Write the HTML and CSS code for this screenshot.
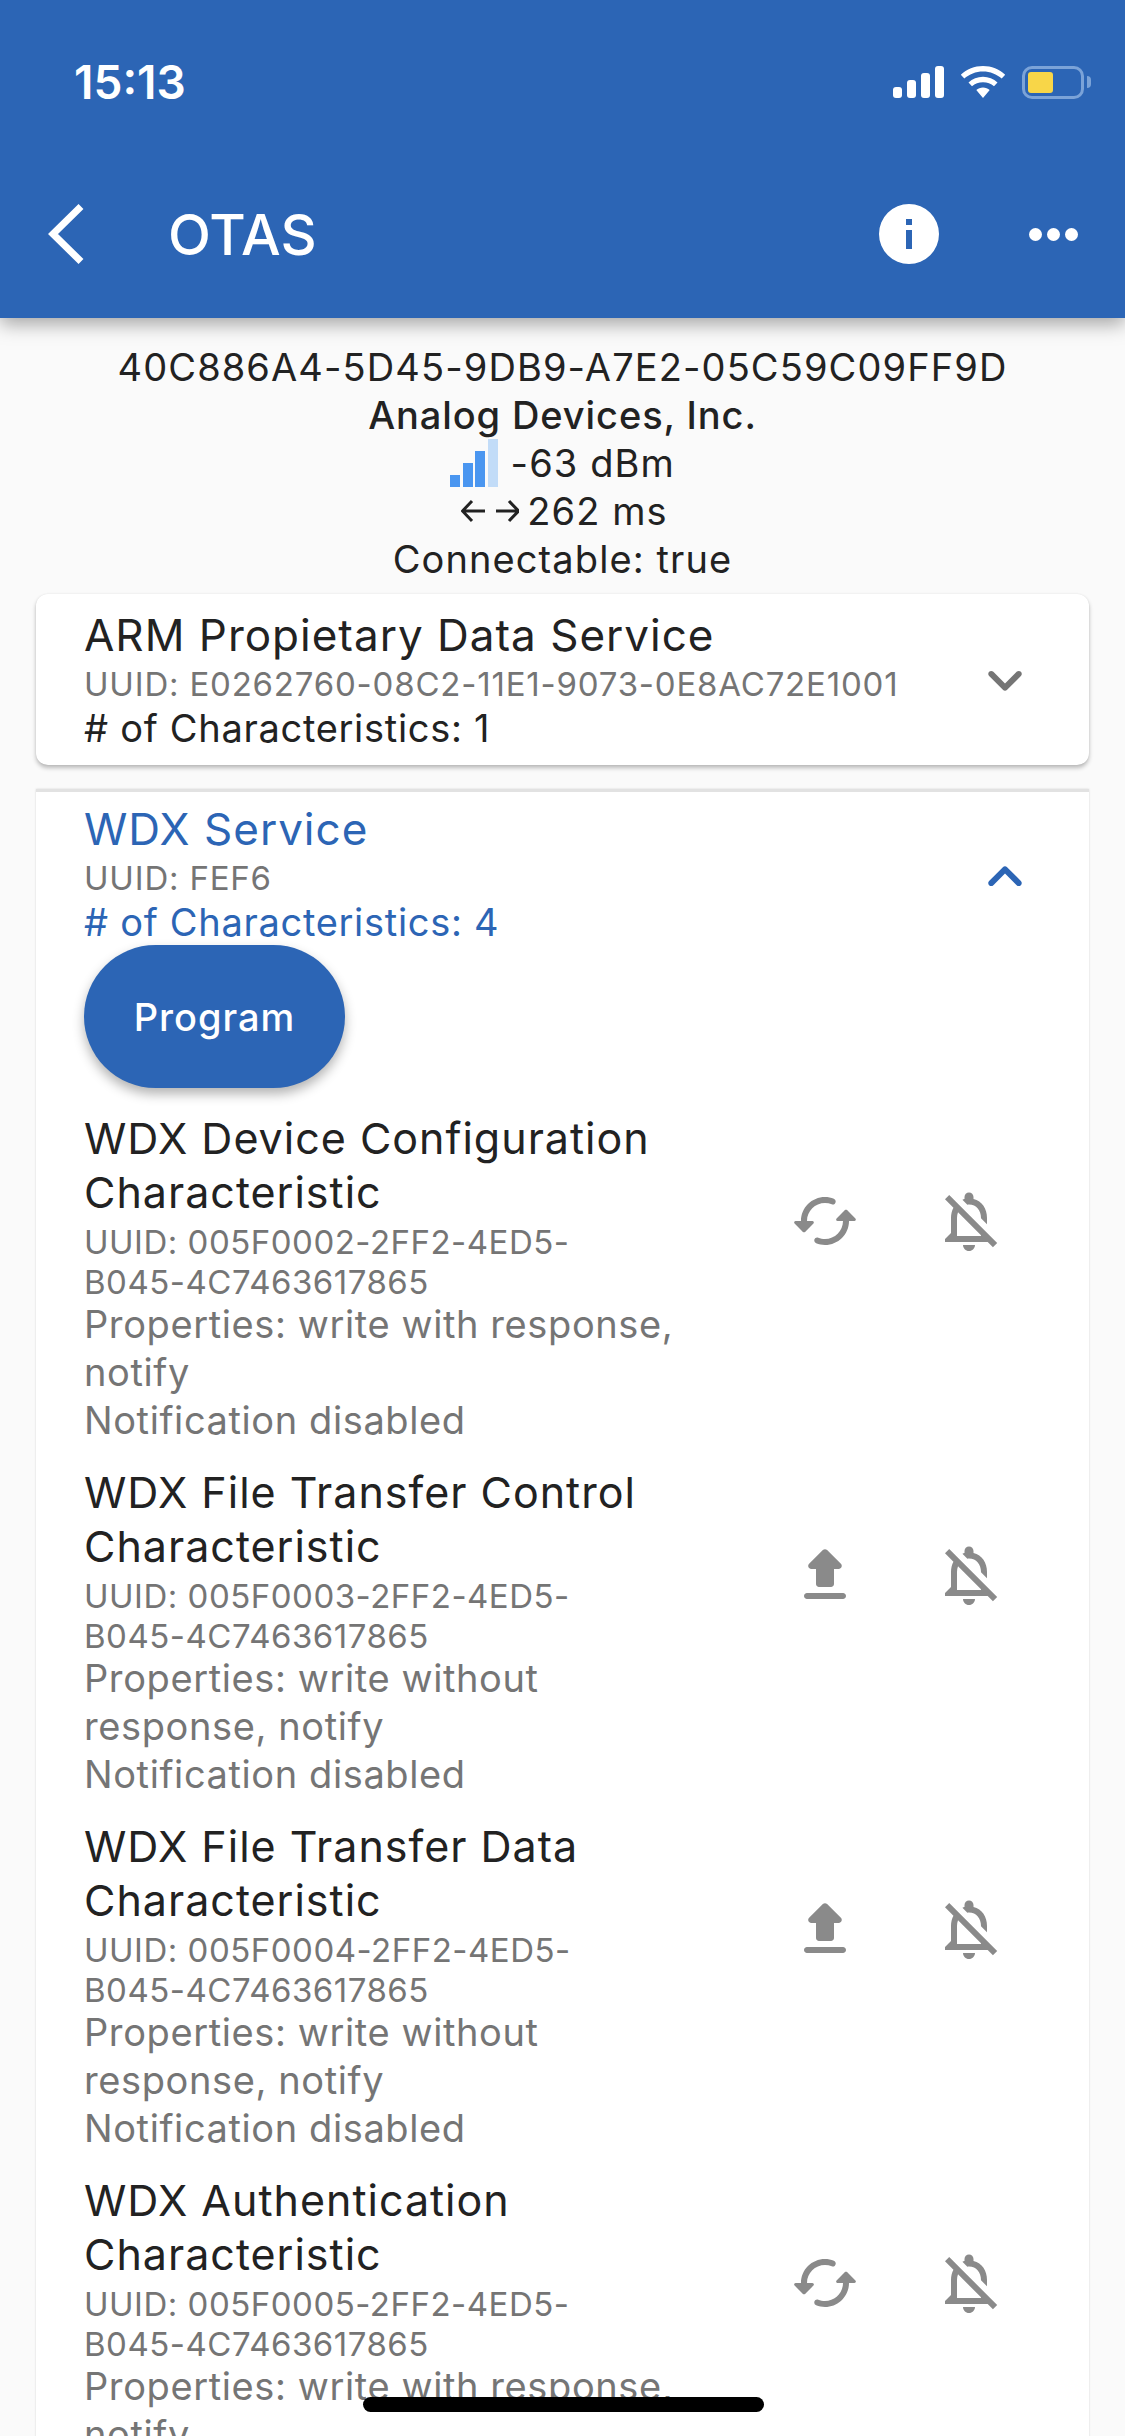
FILE: index.html
```html
<!DOCTYPE html>
<html lang="en">
<head>
    <meta charset="UTF-8">
    <meta name="viewport" content="width=device-width, initial-scale=1.0">
    <title>OTAS</title>
    <link rel="stylesheet" href="styles.css">
</head>
<body>
    <div class="appbar">
        <div class="status">
            <span class="time">15:13</span>
            <div class="status-icons">
                <div class="signal"><i></i><i></i><i></i><i></i></div>
                <svg class="wifi" width="46" height="32" viewBox="0 0 46 32">
                    <path fill="#fff" d="M23 0C14.500 0 6.700 3.300 0.800 8.700L4.300 12.600C9.200 8.100 15.800 5.400 23 5.400S36.800 8.100 41.700 12.600L45.200 8.700C39.300 3.300 31.500 0 23 0ZM23 10.800C17.500 10.800 12.400 12.900 8.500 16.400L12 20.300C14.900 17.700 18.800 16.200 23 16.200S31.100 17.700 34 20.300L37.500 16.400C33.600 12.900 28.500 10.800 23 10.800ZM23 21.600C20.500 21.600 18.100 22.500 16.300 24.100L23 32L29.700 24.100C27.900 22.500 25.500 21.600 23 21.600Z"/>
                </svg>
                <div class="battery"><div class="battery-fill"></div></div>
                <div class="battery-nub"></div>
            </div>
        </div>
        <div class="toolbar">
            <svg class="back" width="36" height="60" viewBox="0 0 36 60">
                <path fill="none" stroke="#fff" stroke-width="7" d="M33 2.500L5 30L33 57.500"/>
            </svg>
            <span class="title">OTAS</span>
            <svg class="info" width="60" height="60" viewBox="0 0 60 60">
                <path fill="#fff" fill-rule="evenodd" d="M30 0a30 30 0 1 0 0 60a30 30 0 1 0 0-60ZM27 15h6v6h-6ZM27 26h6v19h-6Z"/>
            </svg>
            <div class="more"><i></i><i></i><i></i></div>
        </div>
    </div>

    <div class="device">
        <div>40C886A4-5D45-9DB9-A7E2-05C59C09FF9D</div>
        <div class="maker">Analog Devices, Inc.</div>
        <div class="rssi">
            <div class="bars"><i class="b1"></i><i class="b2"></i><i class="b3"></i><i class="b4"></i></div>
            <span>-63 dBm</span>
        </div>
        <div class="interval">
            <svg width="58" height="30" viewBox="0 0 58 30">
                <path fill="none" stroke="#222" stroke-width="3" d="M24 15H2M11 5L1.500 15L11 25M35 15H57M48 5L57.500 15L48 25"/>
            </svg>
            <span>262 ms</span>
        </div>
        <div>Connectable: true</div>
    </div>

    <div class="card service-closed">
        <div class="service-text">
            <div class="service-name">ARM Propietary Data Service</div>
            <div class="uuid">UUID: E0262760-08C2-11E1-9073-0E8AC72E1001</div>
            <div class="count">
                # of Characteristics: 1
            </div>
        </div>
        <svg class="chevron" width="72" height="72" viewBox="0 0 24 24">
            <path fill="#757575" d="M15.880 9.290L12 13.170 8.120 9.290c-.39-.39-1.020-.39-1.410 0-.39.39-.39 1.020 0 1.410l4.590 4.590c.39.39 1.020.39 1.410 0l4.590-4.590c.39-.39.39-1.020 0-1.410-.39-.38-1.030-.39-1.420 0z"/>
        </svg>
    </div>

    <div class="card service-open">
        <div class="service-head">
            <div class="service-text">
                <div class="service-name blue">WDX Service</div>
                <div class="uuid">UUID: FEF6</div>
                <div class="count blue">
                    # of Characteristics: 4
                </div>
            </div>
            <svg class="chevron up" width="72" height="72" viewBox="0 0 24 24">
                <path fill="#2c65b5" d="M15.880 9.290L12 13.170 8.120 9.290c-.39-.39-1.020-.39-1.410 0-.39.39-.39 1.020 0 1.410l4.590 4.590c.39.39 1.020.39 1.410 0l4.590-4.590c.39-.39.39-1.020 0-1.410-.39-.38-1.030-.39-1.420 0z"/>
            </svg>
        </div>
        <button class="program">Program</button>

        <div class="char">
            <div class="char-text">
                <div class="char-name">WDX Device Configuration Characteristic</div>
                <div class="char-uuid">UUID: 005F0002-2FF2-4ED5-B045-4C7463617865</div>
                <div class="char-info">Properties: write with response, notify</div>
                <div class="char-info">Notification disabled</div>
            </div>
            <div class="char-icons">
                <svg width="72" height="72" viewBox="0 0 24 24"><use href="#cached"/></svg>
                <svg width="72" height="72" viewBox="0 0 24 24"><use href="#bell-off"/></svg>
            </div>
        </div>

        <div class="char">
            <div class="char-text">
                <div class="char-name">WDX File Transfer Control Characteristic</div>
                <div class="char-uuid">UUID: 005F0003-2FF2-4ED5-B045-4C7463617865</div>
                <div class="char-info">Properties: write without response, notify</div>
                <div class="char-info">Notification disabled</div>
            </div>
            <div class="char-icons">
                <svg width="72" height="72" viewBox="0 0 24 24"><use href="#upload"/></svg>
                <svg width="72" height="72" viewBox="0 0 24 24"><use href="#bell-off"/></svg>
            </div>
        </div>

        <div class="char">
            <div class="char-text">
                <div class="char-name">WDX File Transfer Data Characteristic</div>
                <div class="char-uuid">UUID: 005F0004-2FF2-4ED5-B045-4C7463617865</div>
                <div class="char-info">Properties: write without response, notify</div>
                <div class="char-info">Notification disabled</div>
            </div>
            <div class="char-icons">
                <svg width="72" height="72" viewBox="0 0 24 24"><use href="#upload"/></svg>
                <svg width="72" height="72" viewBox="0 0 24 24"><use href="#bell-off"/></svg>
            </div>
        </div>

        <div class="char">
            <div class="char-text">
                <div class="char-name">WDX Authentication Characteristic</div>
                <div class="char-uuid">UUID: 005F0005-2FF2-4ED5-B045-4C7463617865</div>
                <div class="char-info">Properties: write with response, notify</div>
                <div class="char-info">Notification disabled</div>
            </div>
            <div class="char-icons">
                <svg width="72" height="72" viewBox="0 0 24 24"><use href="#cached"/></svg>
                <svg width="72" height="72" viewBox="0 0 24 24"><use href="#bell-off"/></svg>
            </div>
        </div>
    </div>

    <div class="home-bar"></div>

    <svg class="icon-defs" width="0" height="0">
        <defs>
            <path id="cached" fill="#8a8a8a" d="M18.650 8.350l-2.790 2.790c-.32.32-.1.860.35.860H18c0 3.310-2.690 6-6 6-.79 0-1.560-.15-2.250-.44-.36-.15-.77-.04-1.040.23-.51.51-.33 1.370.34 1.640.91.37 1.910.57 2.950.57 4.420 0 8-3.580 8-8h1.790c.45 0 .67-.54.35-.85l-2.790-2.790c-.19-.2-.51-.2-.7-.01zM6 12c0-3.310 2.690-6 6-6 .79 0 1.560.15 2.250.44.36.15.77.04 1.040-.23.51-.51.33-1.370-.34-1.640C14.040 4.200 13.040 4 12 4c-4.420 0-8 3.580-8 8H2.210c-.45 0-.67.54-.35.85l2.790 2.790c.2.2.51.2.71 0l2.790-2.790c.31-.31.09-.85-.36-.85H6z"/>
            <path id="upload" fill="#8a8a8a" d="M10 16h4c.55 0 1-.45 1-1v-5h1.590c.89 0 1.340-1.080.71-1.710L12.700 3.700c-.39-.39-1.020-.39-1.410 0L6.700 8.290c-.63.63-.19 1.710.7 1.710H9v5c0 .55.45 1 1 1zm-4 2h12c.55 0 1 .45 1 1s-.45 1-1 1H6c-.55 0-1-.45-1-1s.45-1 1-1z"/>
            <path id="bell-off" fill="#8a8a8a" d="M12 22c1.100 0 2-.9 2-2h-4c0 1.100.9 2 2 2zm0-15.500c2.490 0 4 2.020 4 4.500v.1l2 2V11c0-3.070-1.630-5.640-4.500-6.320V4c0-.83-.67-1.500-1.500-1.500s-1.500.67-1.500 1.500v.68c-.24.06-.47.15-.69.23l1.640 1.640c.18-.02.36-.05.55-.05zM5.410 3.350L4 4.760l2.810 2.810C6.290 8.570 6 9.740 6 11v5l-2 2v1h14.240l1.740 1.740 1.410-1.410L5.410 3.350zM16 17H8v-6c0-.68.12-1.320.34-1.900L16 16.760V17z"/>
        </defs>
    </svg>
</body>
</html>
```

FILE: styles.css
```css
html, body { margin: 0; height: 2436px; overflow: hidden; }
body { position: relative; font-family: Inter, "Noto Sans", sans-serif; background: #fafafa; color: #222; font-size: 38px; letter-spacing: 0.7px; }

.appbar { height: 318px; background: #2c65b5; color: white; box-shadow: 0 6px 18px rgba(0,0,0,0.35); position: relative; }
.status { display: flex; justify-content: space-between; align-items: center; height: 164px; padding: 0 34px 0 74px; box-sizing: border-box; }
.time { font-size: 46px; font-weight: 600; letter-spacing: 0; }
.status-icons { display: flex; align-items: center; }
.signal { display: flex; align-items: flex-end; gap: 5px; height: 32px; margin-right: 16px; }
.signal i { display: block; width: 9px; background: white; border-radius: 3px; }
.signal i:nth-child(1) { height: 11px; }
.signal i:nth-child(2) { height: 18px; }
.signal i:nth-child(3) { height: 25px; }
.signal i:nth-child(4) { height: 32px; }
.wifi { margin-right: 16px; }
.battery { width: 62px; height: 33px; box-sizing: border-box; border: 3px solid #7ba3d8; border-radius: 10px; padding: 3px; }
.battery-fill { width: 25px; height: 21px; background: #f8d648; border-radius: 3px; }
.battery-nub { width: 4px; height: 12px; margin-left: 3px; background: #7ba3d8; border-radius: 0 4px 4px 0; }

.toolbar { display: flex; align-items: center; height: 60px; margin-top: 40px; padding-left: 48px; }
.title { font-size: 56px; font-weight: 500; margin: 2px 0 0 84px; letter-spacing: 0; }
.info { margin-left: auto; }
.more { display: flex; gap: 5px; margin: 0 47px 0 90px; }
.more i { display: block; width: 13px; height: 13px; background: white; border-radius: 50%; }

.device { padding-top: 25px; text-align: center; line-height: 48px; letter-spacing: 1.1px; }
.maker { font-weight: 500; letter-spacing: 0.9px; }
.rssi, .interval { display: flex; justify-content: center; align-items: center; height: 48px; }
.bars { display: flex; align-items: flex-end; gap: 2.500px; height: 48px; margin-right: 13px; }
.bars i { display: block; width: 10px; background: #4a96f0; }
.bars .b1 { height: 12px; }
.bars .b2 { height: 24px; }
.bars .b3 { height: 36px; }
.bars .b4 { height: 48px; background: #c2dcf8; }
.interval { padding-left: 4px; }
.interval svg { margin-right: 8px; }

.card { margin: 0 36px; background: white; border-radius: 12px; }
.service-closed { display: flex; justify-content: space-between; margin-top: 11px; height: 171px; padding: 13px 48px; box-sizing: border-box; box-shadow: 0 3px 4px rgba(0,0,0,0.25), 0 0 2px rgba(0,0,0,0.08); }
.service-text { line-height: 48px; }
.service-name { font-size: 44px; line-height: 56px; letter-spacing: 1px; }
.uuid { font-size: 33px; color: #757575; line-height: 42px; letter-spacing: 0.8px; }
.count { margin-top: -1px; }
.blue { color: #2c65b5; }
.chevron { margin-top: 37px; }
.up { transform: rotate(180deg); margin-top: 40px; }

.service-open { margin-top: 24px; padding: 9px 48px 0; border-radius: 0; border-top: 3px solid #e2e2e2; box-shadow: 0 0 2px rgba(0,0,0,0.15); }
.service-head { display: flex; justify-content: space-between; }
.program { display: block; width: 261px; height: 143px; margin: -1px 0 23px; background: #2c65b5; color: white; border: none; border-radius: 72px; font-family: inherit; font-size: 38px; font-weight: 500; letter-spacing: 1px; box-shadow: 0 6px 12px rgba(0,0,0,0.3); }

.char { display: flex; justify-content: space-between; margin-bottom: 22px; height: 332px; }
.char-text { width: 610px; }
.char-name { font-size: 43px; line-height: 54px; letter-spacing: 1px; }
.char-uuid { width: 560px; font-size: 33px; line-height: 40px; color: #757575; letter-spacing: 0.5px; padding-top: 3px; margin-bottom: -3px; }
.char-info { line-height: 48px; color: #757575; letter-spacing: 0.6px; padding-top: 1px; margin-bottom: -1px; }
.char-icons { display: flex; margin-top: 74px; }
.char-icons svg { padding: 0 36px; }

.home-bar { position: absolute; left: 363px; top: 2397px; width: 401px; height: 15px; background: black; border-radius: 8px; }
.icon-defs { position: absolute; }
```
